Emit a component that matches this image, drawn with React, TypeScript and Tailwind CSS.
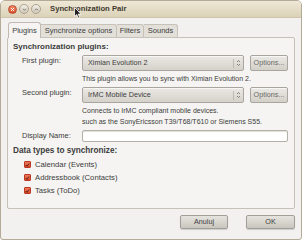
import React from 'react';

const font = { fontFamily: '"Liberation Sans", Arial, sans-serif' };

function Combo({ label }: { label: string }) {
    return (
        <div className="flex items-center w-[162px] h-full rounded-[2px] border border-[#a8a59e] bg-gradient-to-b from-[#ebe9e5] to-[#d5d2cb] shadow-[inset_0_1px_0_#f8f7f5]">
            <span className="flex-1 pl-[5px] text-[7.2px] text-[#3c3c3c]">{label}</span>
            <span className="w-[10px] flex flex-col items-center justify-center border-l border-[#bdb9b2] h-[9px] leading-none">
                <svg width="5" height="8" viewBox="0 0 5 8">
                    <path d="M1 3 L2.5 1.5 L4 3" fill="none" stroke="#6a6761" strokeWidth="0.8" />
                    <path d="M1 5 L2.5 6.5 L4 5" fill="none" stroke="#6a6761" strokeWidth="0.8" />
                </svg>
            </span>
        </div>
    );
}

function OptionsButton() {
    return (
        <button className="w-[38px] h-full rounded-[2px] border border-[#a8a59e] bg-gradient-to-b from-[#ebe9e5] to-[#d3d0c9] text-[7.2px] text-[#6c6a65] shadow-[inset_0_1px_0_#f8f7f5]">
            Options...
        </button>
    );
}

function Check({ label }: { label: string }) {
    return (
        <div className="flex items-center h-[13px] pl-[16px]">
            <span className="w-[7px] h-[7px] rounded-[1px] bg-gradient-to-b from-[#f07a5e] to-[#d9472b] border border-[#b9381f] flex items-center justify-center">
                <svg width="6" height="6" viewBox="0 0 6 6">
                    <path d="M1 3 L2.4 4.6 L5 1" fill="none" stroke="#4a1a10" strokeWidth="1" />
                </svg>
            </span>
            <span className="ml-[4px] text-[7.7px] text-[#3c3c3c]">{label}</span>
        </div>
    );
}

export default function App() {
    return (
        <div className="w-[302px] h-[240px] bg-white relative overflow-hidden" style={font}>
            <div className="w-full h-full flex flex-col rounded-t-[5px] rounded-b-[3px] border border-[#b3ab98] overflow-hidden bg-[#f2f1f0]">
                {/* title bar */}
                <div className="h-[17px] shrink-0 flex items-center bg-gradient-to-b from-[#efe8d6] to-[#dcd2b9] border-b border-[#cfc5ac]">
                    <div className="flex items-center gap-[2px] pl-[7px]">
                        <span className="w-[9px] h-[9px] rounded-full bg-gradient-to-b from-[#f58d69] to-[#d9502c] border border-[#b8472a] flex items-center justify-center">
                            <svg width="5" height="5" viewBox="0 0 5 5">
                                <path d="M1 1 L4 4 M4 1 L1 4" stroke="#fff" strokeWidth="0.9" />
                            </svg>
                        </span>
                        <span className="w-[10px] h-[10px] rounded-full bg-gradient-to-b from-[#f4f1ea] to-[#cfc8b8] border border-[#aaa290] flex items-center justify-center">
                            <svg width="5" height="5" viewBox="0 0 5 5">
                                <path d="M1 1.8 L2.5 3.3 L4 1.8" fill="none" stroke="#6e685b" strokeWidth="0.9" />
                            </svg>
                        </span>
                        <span className="w-[10px] h-[10px] rounded-full bg-gradient-to-b from-[#f4f1ea] to-[#cfc8b8] border border-[#aaa290] flex items-center justify-center">
                            <svg width="5" height="5" viewBox="0 0 5 5">
                                <path d="M1 3.3 L2.5 1.8 L4 3.3" fill="none" stroke="#6e685b" strokeWidth="0.9" />
                            </svg>
                        </span>
                    </div>
                    <span className="ml-[9px] text-[7.7px] font-bold text-[#3f3a30]">Synchronization Pair</span>
                </div>

                <div className="flex-1 flex flex-col px-[6px]">
                    {/* tabs */}
                    <div className="flex items-end h-[19px] shrink-0 pl-[1px] text-[7.5px] text-[#3c3c3c]">
                        <div className="w-[33px] h-[16px] flex items-center justify-center border border-b-0 border-[#bfbbb3] rounded-t-[3px] bg-[#f5f4f2] relative top-[1px]">
                            Plugins
                        </div>
                        <div className="w-[76px] h-[13px] flex items-center justify-center border border-b-0 border-l-0 border-[#c6c2ba] rounded-tr-[3px] bg-[#e3e0da]">
                            Synchronize options
                        </div>
                        <div className="w-[27px] h-[13px] flex items-center justify-center border border-b-0 border-l-0 border-[#c6c2ba] rounded-tr-[3px] bg-[#e3e0da]">
                            Filters
                        </div>
                        <div className="w-[34px] h-[13px] flex items-center justify-center border border-b-0 border-l-0 border-[#c6c2ba] rounded-tr-[3px] bg-[#e3e0da]">
                            Sounds
                        </div>
                    </div>

                    {/* panel */}
                    <div className="h-[172px] shrink-0 border border-[#c6c2ba] rounded-[2px] bg-[#f5f4f2] flex flex-col text-[#3c3c3c]">
                        <div className="mt-[4px] h-[10px] pl-[5px] flex items-center text-[8px] font-bold">Synchronization plugins:</div>

                        <div className="mt-[3px] h-[16px] flex pl-[14px]">
                            <span className="w-[60px] pt-[1px] text-[7.5px] leading-[9px]">First plugin:</span>
                            <Combo label="Ximian Evolution 2" />
                            <span className="w-[6px]" />
                            <OptionsButton />
                        </div>
                        <div className="mt-[3px] h-[10px] flex items-center pl-[74px] text-[7px]">
                            This plugin allows you to sync with Ximian Evolution 2.
                        </div>

                        <div className="mt-[3px] h-[16px] flex pl-[14px]">
                            <span className="w-[60px] pt-[1px] text-[7.5px] leading-[9px]">Second plugin:</span>
                            <Combo label="IrMC Mobile Device" />
                            <span className="w-[6px]" />
                            <OptionsButton />
                        </div>
                        <div className="mt-[2px] pl-[74px] text-[7px] leading-[11px]">
                            <div>Connects to IrMC compliant mobile devices.</div>
                            <div>such as the SonyEricsson T39/T68/T610 or Siemens S55.</div>
                        </div>

                        <div className="mt-[3px] h-[12px] flex items-center pl-[14px]">
                            <span className="w-[60px] text-[7.5px]">Display Name:</span>
                            <div className="w-[206px] h-full rounded-[2px] border border-[#b5b1a9] bg-white shadow-[inset_0_1px_1px_#e0ded9]" />
                        </div>

                        <div className="mt-[4px] h-[10px] pl-[5px] flex items-center text-[8.2px] font-bold">Data types to synchronize:</div>
                        <div className="mt-[2px] flex flex-col">
                            <Check label="Calendar (Events)" />
                            <Check label="Addressbook (Contacts)" />
                            <Check label="Tasks (ToDo)" />
                        </div>
                    </div>

                    {/* buttons */}
                    <div className="mt-[6px] h-[14px] flex justify-end gap-[18px]">
                        <button className="w-[48px] h-full rounded-[2px] border border-[#a19e97] bg-gradient-to-b from-[#e6e4df] to-[#c9c6bf] text-[7.2px] text-[#3c3c3c] shadow-[0_1px_1px_rgba(0,0,0,0.15)]">
                            Anuluj
                        </button>
                        <button className="w-[49px] h-full rounded-[2px] border border-[#a19e97] bg-gradient-to-b from-[#e6e4df] to-[#c9c6bf] text-[7.2px] text-[#3c3c3c] shadow-[0_1px_1px_rgba(0,0,0,0.15)]">
                            OK
                        </button>
                    </div>
                </div>
            </div>

            {/* mouse pointer */}
            <svg className="absolute left-[74px] top-[7px]" width="8" height="12" viewBox="0 0 8 12">
                <path d="M0.5 0.5 L0.5 9.5 L2.7 7.6 L4.2 11 L5.6 10.4 L4.2 7.1 L7.2 7.1 Z" fill="#222" stroke="#fff" strokeWidth="0.8" />
            </svg>
        </div>
    );
}
